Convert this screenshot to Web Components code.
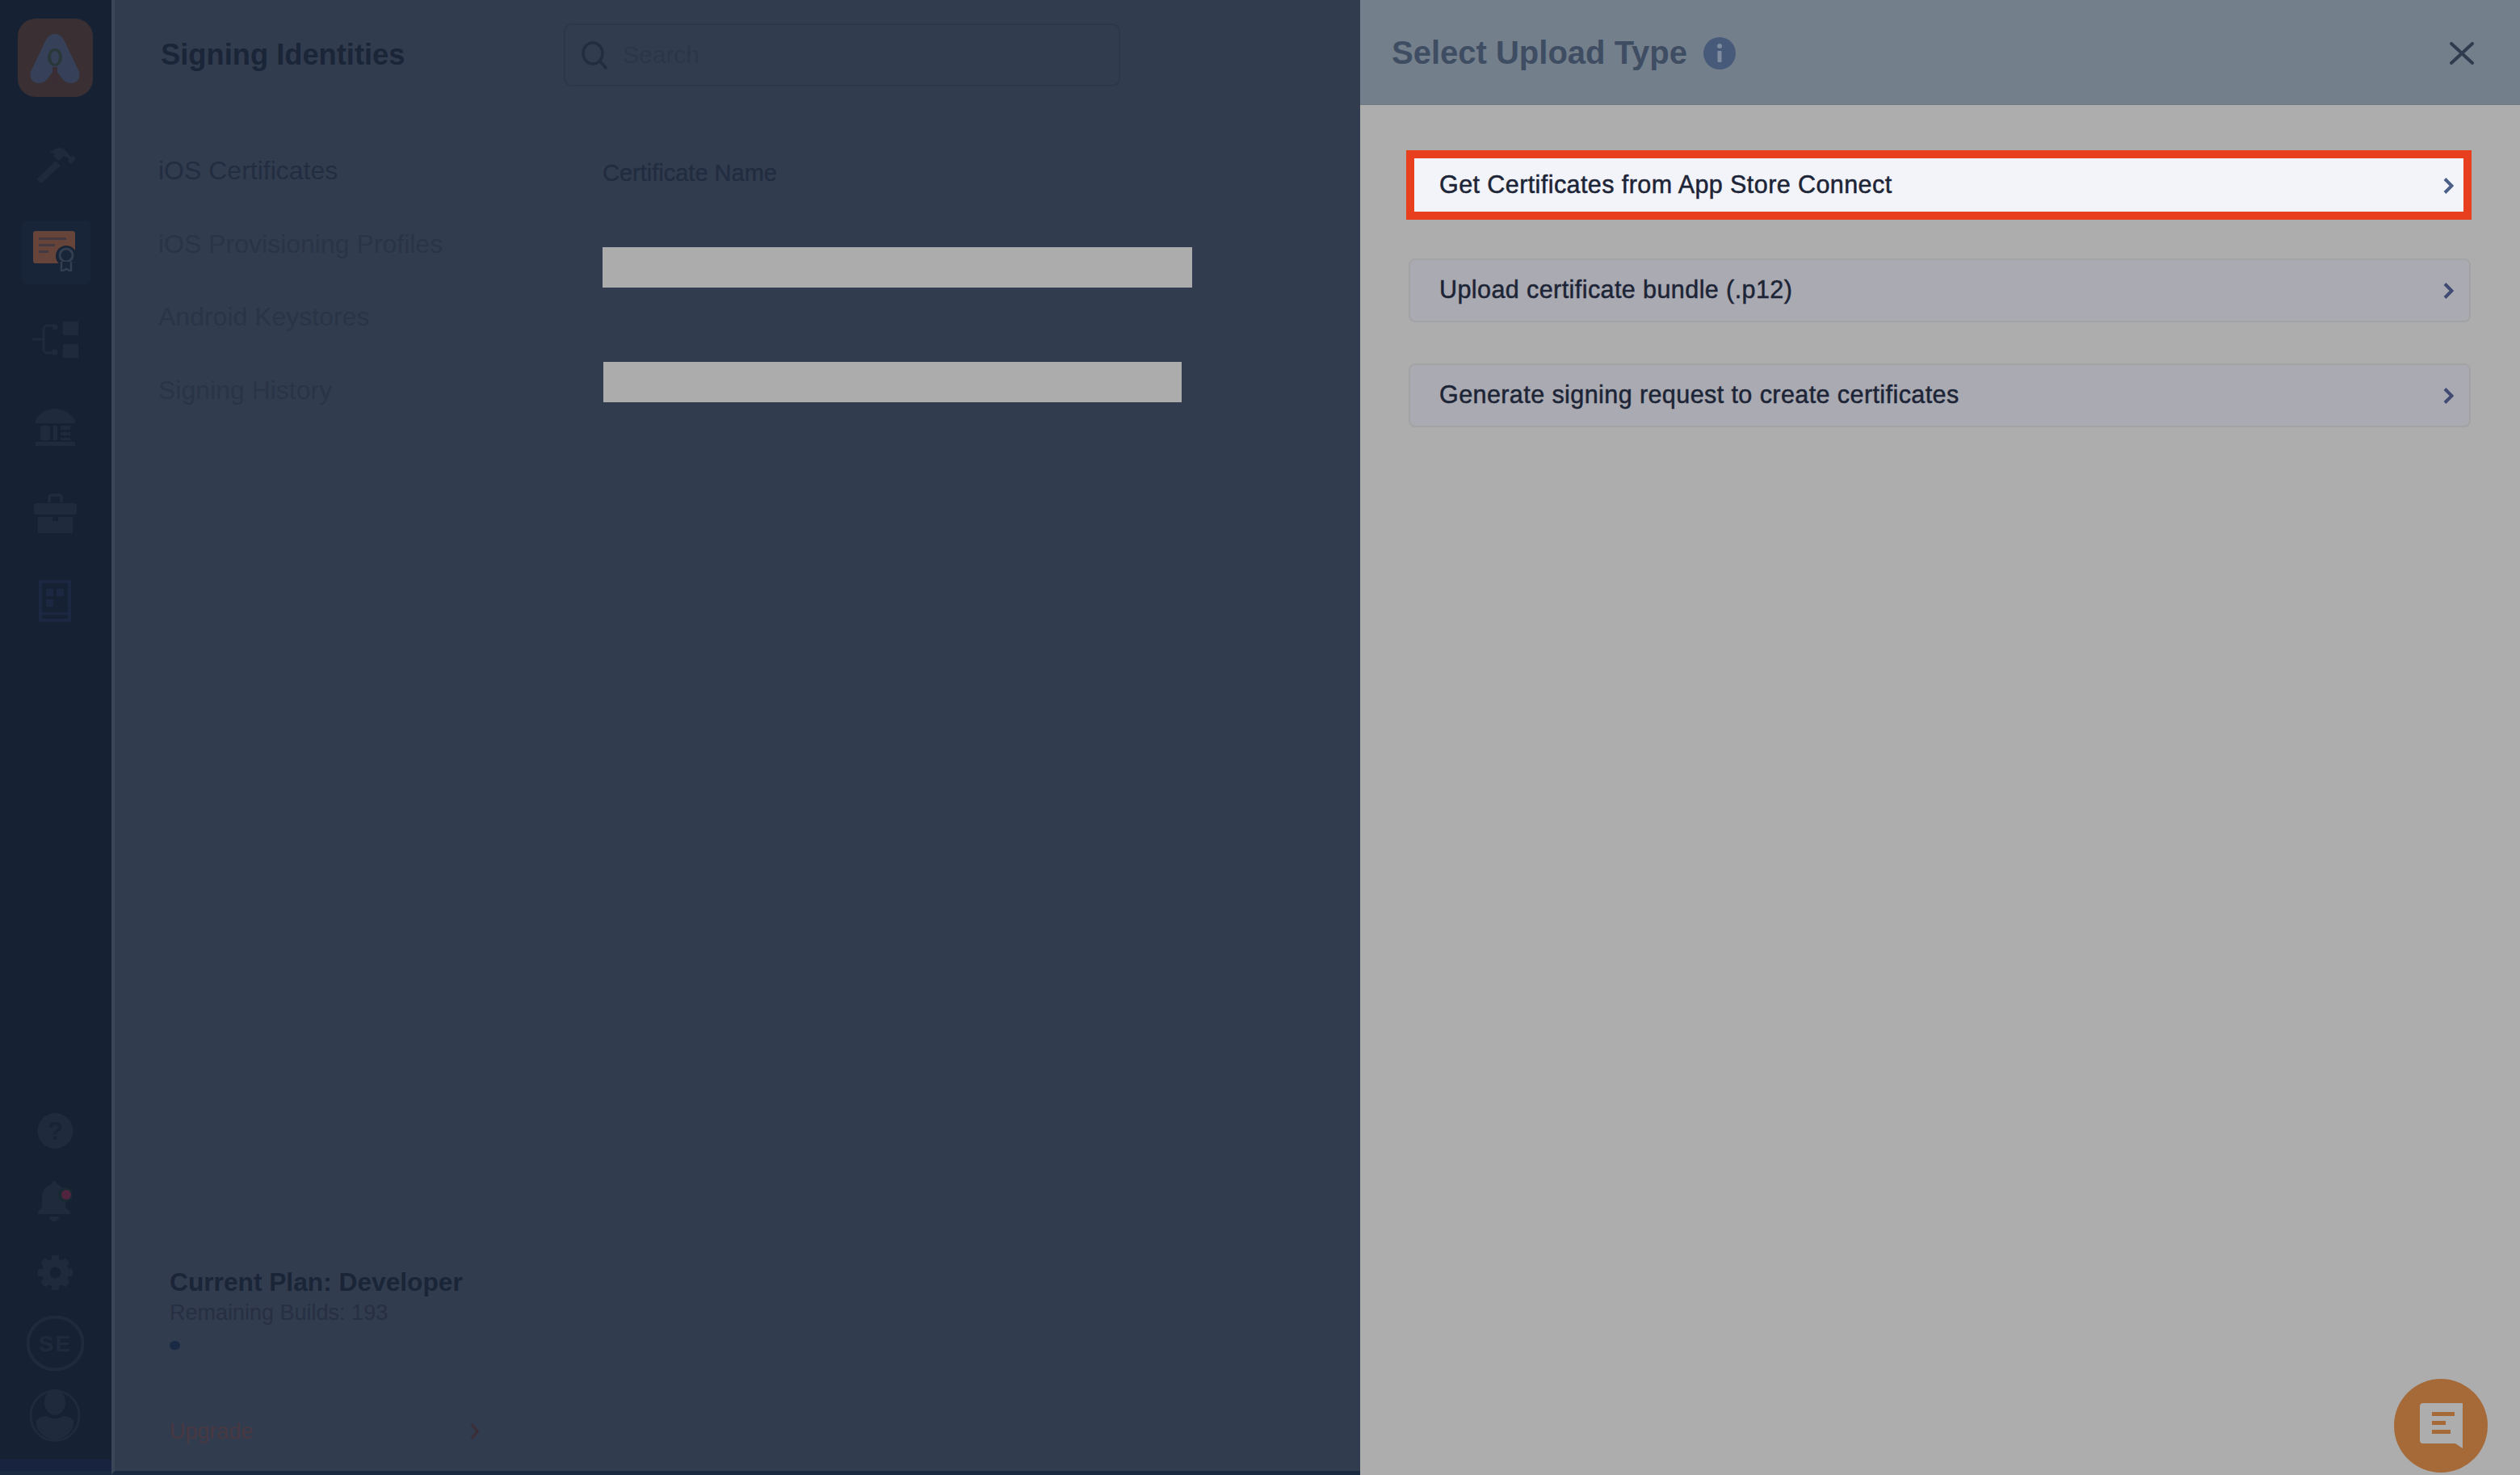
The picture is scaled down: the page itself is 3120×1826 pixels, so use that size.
<!DOCTYPE html>
<html>
<head>
<meta charset="utf-8">
<title>Signing Identities</title>
<style>
  html, body { margin: 0; padding: 0; }
  body { width: 3120px; height: 1826px; overflow: hidden; font-family: "Liberation Sans", Arial, sans-serif; }
</style>
</head>
<body>
<app-shell>
  <nav-rail>
    <rail-icon name="logo" w="93" h="97" top="23"></rail-icon>
    <rail-icon name="hammer" w="51" h="45" top="62"></rail-icon>
    <rail-icon name="cert" w="54" h="50" top="59" active></rail-icon>
    <rail-icon name="flow" w="57" h="46" top="61"></rail-icon>
    <rail-icon name="bank" w="53" h="47" top="62"></rail-icon>
    <rail-icon name="case" w="53" h="50" top="58"></rail-icon>
    <rail-icon name="doc" w="40" h="52" top="58"></rail-icon>
    <rail-icon slot="bottom" name="help" w="45" h="44"></rail-icon>
    <rail-icon slot="bottom" name="bell" w="42" h="50" top="40"></rail-icon>
    <rail-icon slot="bottom" name="gear" w="45" h="43" top="42"></rail-icon>
    <rail-icon slot="bottom" name="initials" w="71" h="68" top="32"></rail-icon>
    <rail-icon slot="bottom" name="avatar" w="62" h="65" top="23"></rail-icon>
  </nav-rail>
  <signing-pane></signing-pane>
  <upload-drawer heading="Select Upload Type">
    <upload-option highlight>Get Certificates from App Store Connect</upload-option>
    <upload-option>Upload certificate bundle (.p12)</upload-option>
    <upload-option>Generate signing request to create certificates</upload-option>
  </upload-drawer>
  <chat-fab></chat-fab>
</app-shell>

<script>
const FONT = '"Liberation Sans", Arial, sans-serif';
const INK = '#1f2a3c';

class AppShell extends HTMLElement {
  connectedCallback() {
    this.attachShadow({ mode: 'open' });
    this.shadowRoot.innerHTML = `
      <style>
        :host {
          display: flex;
          position: relative;
          width: 3120px;
          height: 1826px;
          overflow: hidden;
          font-family: ${FONT};
        }
      </style>
      <slot></slot>
    `;
  }
}

class NavRail extends HTMLElement {
  connectedCallback() {
    this.attachShadow({ mode: 'open' });
    this.shadowRoot.innerHTML = `
      <style>
        :host {
          display: flex;
          flex-direction: column;
          align-items: center;
          flex: 0 0 138px;
          height: 1826px;
          box-sizing: border-box;
          background: #162234;
          border-bottom: 5px solid #1a2a40;
        }
        .top, .bottom { display: flex; flex-direction: column; align-items: center; width: 100%; box-sizing: border-box; padding-right: 2px; }
        .bottom { margin-top: auto; padding-right: 0; }
        .band { align-self: stretch; height: 14px; margin-top: 22px; background: #17233f; }
        ::slotted(rail-icon[slot="bottom"]) { left: -1px; }
      </style>
      <div class="top"><slot></slot></div>
      <div class="bottom"><slot name="bottom"></slot><div class="band"></div></div>
    `;
  }
}

const ICONS = {
  logo: `<rect width="93" height="97" rx="22" fill="#3a3033"/>
    <path d="M46 19c7 0 10 5 13 11l16 34c4 9-1 16-9 16-6 0-9-3-13-8l-4-6V80h-6V66l-4 6c-4 5-7 8-13 8-8 0-13-7-9-16l16-34c3-6 6-11 13-11z" fill="#364058"/>
    <ellipse cx="46" cy="48" rx="9" ry="11" fill="#2b3638"/><ellipse cx="46" cy="48" rx="5" ry="8" fill="#364058"/>
    <rect x="43" y="60" width="6" height="20" fill="#3a2e34"/>`,
  hammer: `<path d="M2 40L26 17l6 6L8 45z" fill="${INK}"/>
    <path d="M17 8c7-7 15-9 21-4l6 8 4-1 3 3-6 7-4-3 1-4-6-3-6 6-7-6 2-2c-2-2-5-2-8-1z" fill="${INK}"/>`,
  cert: `<rect x="0" y="0" width="52" height="40" rx="3" fill="#66443a"/>
    <rect x="7" y="8" width="34" height="3" fill="#423a40"/><rect x="7" y="16" width="20" height="3" fill="#423a40"/><rect x="7" y="24" width="12" height="3" fill="#423a40"/>
    <circle cx="41" cy="31" r="13" fill="#182437"/><circle cx="41" cy="30" r="8" fill="#182437" stroke="#333e50" stroke-width="3"/>
    <path d="M35 38v12l6-3 6 3V38" fill="#182437" stroke="#333e50" stroke-width="2.500"/>`,
  flow: `<rect x="38" y="1" width="19" height="17" fill="${INK}"/><rect x="38" y="29" width="19" height="17" fill="${INK}"/>
    <path d="M0 23h14M14 11v24c0 3 2 5 5 5h11M14 11c0-3 2-5 5-5h11" fill="none" stroke="${INK}" stroke-width="3"/>
    <circle cx="28" cy="8" r="3.500" fill="${INK}"/><circle cx="28" cy="39" r="3.500" fill="${INK}"/>`,
  bank: `<path d="M2 16C6 7 16 1 26 1s21 6 25 15v3H2z" fill="${INK}"/>
    <rect x="8" y="22" width="12" height="18" fill="${INK}"/><rect x="24" y="22" width="5" height="18" fill="${INK}"/>
    <rect x="33" y="22" width="12" height="5" fill="${INK}"/><rect x="33" y="30" width="12" height="4" fill="${INK}"/><rect x="33" y="37" width="12" height="3" fill="${INK}"/>
    <rect x="2" y="42" width="49" height="5" fill="${INK}"/>`,
  case: `<path d="M17 12V6c0-3 2-5 5-5h9c3 0 5 2 5 5v6h-4V6c0-1 0-1-1-1h-9c-1 0-1 0-1 1v6z" fill="${INK}"/>
    <rect x="0" y="13" width="53" height="14" rx="2" fill="${INK}"/>
    <path d="M5 30h18v5h7v-5h18v20H5z" fill="${INK}"/>`,
  doc: `<rect x="2" y="2" width="36" height="48" fill="none" stroke="#1c2741" stroke-width="4"/>
    <rect x="9" y="11" width="9" height="9" fill="#1c2741"/><rect x="22" y="11" width="9" height="9" fill="#1c2741"/><rect x="9" y="24" width="9" height="9" fill="#1c2741"/>
    <rect x="2" y="40" width="36" height="3" fill="#1c2741"/>`,
  help: `<circle cx="22.500" cy="22" r="22" fill="${INK}"/>
    <text x="22.500" y="33" text-anchor="middle" font-size="32" font-weight="700" font-family="Liberation Sans" fill="#182436">?</text>`,
  bell: `<path d="M20 0c2 0 3 2 3 4 7 2 11 8 11 15v14l6 5v3H0v-3l5-5V19C5 12 10 6 17 4c0-2 1-4 3-4z" fill="${INK}"/>
    <path d="M14 44h12c0 4-3 6-6 6s-6-2-6-6z" fill="${INK}"/>
    <circle cx="34" cy="17" r="9" fill="#1a2a33"/><circle cx="35" cy="17" r="6" fill="#50243f"/>`,
  gear: `<g fill="${INK}"><circle cx="22.500" cy="21.500" r="17"/>
    <rect x="18" y="0" width="9" height="43" rx="2"/><rect x="18" y="0" width="9" height="43" rx="2" transform="rotate(45 22.500 21.500)"/>
    <rect x="18" y="0" width="9" height="43" rx="2" transform="rotate(90 22.500 21.500)"/><rect x="18" y="0" width="9" height="43" rx="2" transform="rotate(135 22.500 21.500)"/></g>
    <circle cx="22.500" cy="21.500" r="7" fill="#162234"/>`,
  initials: `<ellipse cx="35.500" cy="34" rx="34" ry="32.500" fill="none" stroke="${INK}" stroke-width="4"/>
    <text x="35.500" y="44" text-anchor="middle" font-size="28" font-weight="700" letter-spacing="2" font-family="Liberation Sans" fill="${INK}">SE</text>`,
  avatar: `<ellipse cx="31" cy="32.500" rx="30" ry="31" fill="none" stroke="${INK}" stroke-width="3"/>
    <ellipse cx="31" cy="16" rx="13" ry="16" fill="${INK}"/>
    <path d="M8 38c6-5 12-6 15-4 4 3 12 3 16 0 3-2 9-1 15 4 2 12-10 24-23 24S6 50 8 38z" fill="${INK}"/>`
};

class RailIcon extends HTMLElement {
  connectedCallback() {
    const w = this.getAttribute('w');
    const h = this.getAttribute('h');
    const active = this.hasAttribute('active');
    this.style.marginTop = (this.getAttribute('top') || 0) + 'px';
    this.attachShadow({ mode: 'open' });
    this.shadowRoot.innerHTML = `
      <style>
        :host { display: block; position: relative; width: ${w}px; height: ${h}px; }
        svg { display: block; position: relative; }
        .box { position: absolute; left: -14px; right: -17px; top: -13px; bottom: -16px; background: #182437; border-radius: 6px; }
      </style>
      ${active ? '<div class="box"></div>' : ''}
      <svg width="${w}" height="${h}" viewBox="0 0 ${w} ${h}">${ICONS[this.getAttribute('name')]}</svg>
    `;
  }
}

class SigningPane extends HTMLElement {
  connectedCallback() {
    this.attachShadow({ mode: 'open' });
    this.shadowRoot.innerHTML = `
      <style>
        :host {
          display: flex;
          flex: 0 0 1546px;
          height: 1826px;
          box-sizing: border-box;
          background: #323c4f;
          border-left: 4px solid #3a4558;
          border-bottom: 5px solid #1a2a40;
          font-family: ${FONT};
        }
        .side { display: flex; flex-direction: column; width: 556px; padding-top: 46px; box-sizing: border-box; }
        h1 { margin: 0 0 0 57px; font-size: 36.300px; line-height: 44px; font-weight: 700; color: #1a2538; }
        .menu { display: flex; flex-direction: column; margin: 76px 0 0 54px; font-size: 32px; color: #2a3447; }
        .menu div { height: 90.500px; line-height: 90px; }
        .menu div:first-child { color: #232d41; }
        .plan { margin: auto 0 34px 68px; }
        .plan b { display: block; font-size: 31.700px; line-height: 36px; color: #1a2538; }
        .plan span { display: block; margin-top: 5px; font-size: 27px; line-height: 30px; color: #272f42; }
        .meter { width: 13px; height: 11px; margin-top: 20px; border-radius: 50%; background: #1a2a44; }
        .upgrade { display: flex; justify-content: space-between; align-items: center; width: 383px; height: 30px; margin-top: 86px; font-size: 27px; color: #483841; }
        .main { display: flex; flex-direction: column; padding-top: 29px; }
        .search { display: flex; align-items: center; gap: 19px; width: 689px; height: 78px; box-sizing: border-box; padding-left: 20px; border: 2px solid #2d3749; border-radius: 10px; font-size: 30px; color: #2c3649; }
        .head { margin: 90px 0 0 48px; font-size: 29px; line-height: 34px; color: #222c40; -webkit-text-stroke: .4px #222c40; }
        .bar { height: 50px; background: #acacac; }
        .b1 { width: 730px; margin: 75px 0 0 48px; }
        .b2 { width: 716px; margin: 92px 0 0 49px; }
      </style>
      <div class="side">
        <h1>Signing Identities</h1>
        <div class="menu">
          <div>iOS Certificates</div>
          <div>iOS Provisioning Profiles</div>
          <div>Android Keystores</div>
          <div>Signing History</div>
        </div>
        <div class="plan">
          <b>Current Plan: Developer</b>
          <span>Remaining Builds: 193</span>
          <div class="meter"></div>
          <div class="upgrade">Upgrade
            <svg width="10" height="20" viewBox="0 0 10 20"><path d="M1 1l7 9-7 9" fill="none" stroke="#3a2f38" stroke-width="3.500"/></svg>
          </div>
        </div>
      </div>
      <div class="main">
        <div class="search">
          <svg width="32" height="36" viewBox="0 0 32 36"><ellipse cx="14" cy="16" rx="12" ry="13" fill="none" stroke="#222d40" stroke-width="3.500"/><path d="M23 26l7 8" stroke="#222d40" stroke-width="3.500" stroke-linecap="round"/></svg>
          Search
        </div>
        <div class="head">Certificate Name</div>
        <div class="bar b1"></div>
        <div class="bar b2"></div>
      </div>
    `;
  }
}

class UploadDrawer extends HTMLElement {
  connectedCallback() {
    this.attachShadow({ mode: 'open' });
    this.shadowRoot.innerHTML = `
      <style>
        :host {
          display: flex;
          flex-direction: column;
          flex: 1;
          height: 1826px;
          background: #adadad;
          font-family: ${FONT};
        }
        header {
          display: flex;
          align-items: center;
          height: 130px;
          box-sizing: border-box;
          padding: 2px 57px 0 39px;
          background: #747f8c;
          border-bottom: 1px solid #6f7882;
        }
        h2 { margin: 0; font-size: 40px; font-weight: 700; color: #3f4d63; }
        .info { margin-left: 20px; }
        .close { margin-left: auto; }
        .list { display: flex; flex-direction: column; gap: 51px; padding: 60px 61px 0 60px; }
      </style>
      <header>
        <h2>${this.getAttribute('heading')}</h2>
        <svg class="info" width="40" height="40" viewBox="0 0 40 40">
          <circle cx="20" cy="20" r="20" fill="#485a7a"/>
          <circle cx="20" cy="11" r="3" fill="#7f8ca0"/>
          <rect x="17.500" y="17" width="5" height="14" rx="1" fill="#7f8ca0"/>
        </svg>
        <svg class="close" width="30" height="28" viewBox="0 0 30 28"><path d="M2 2l26 24M28 2L2 26" fill="none" stroke="#303c4e" stroke-width="4" stroke-linecap="round"/></svg>
      </header>
      <div class="list"><slot></slot></div>
    `;
  }
}

class UploadOption extends HTMLElement {
  connectedCallback() {
    const on = this.hasAttribute('highlight');
    this.attachShadow({ mode: 'open' });
    this.shadowRoot.innerHTML = `
      <style>
        :host {
          display: flex;
          align-items: center;
          justify-content: space-between;
          position: relative;
          height: 79px;
          box-sizing: border-box;
          padding: 0 19px 0 36px;
          background: ${on ? '#f2f4fa' : '#aaaab2'};
          border: 2px solid ${on ? '#f2f4fa' : '#a3a3a6'};
          border-radius: 8px;
        }
        .label { padding-bottom: 3px; font-size: 30.500px; letter-spacing: .42px; color: #1c2436; -webkit-text-stroke: .5px #1c2436; }
        .mark { position: absolute; left: -5px; right: -3px; top: -6px; bottom: -5px; border: 10px solid #e8401f; }
      </style>
      <span class="label"><slot></slot></span>
      <svg width="13" height="20" viewBox="0 0 13 20"><path d="M2 1.500l8.500 8.500-8.500 8.500" fill="none" stroke="${on ? '#4b6088' : '#414a72'}" stroke-width="4"/></svg>
      ${on ? '<div class="mark"></div>' : ''}
    `;
  }
}

class ChatFab extends HTMLElement {
  connectedCallback() {
    this.attachShadow({ mode: 'open' });
    this.shadowRoot.innerHTML = `
      <style>
        :host {
          display: flex;
          align-items: center;
          justify-content: center;
          position: absolute;
          right: 40px;
          bottom: 3px;
          width: 116px;
          height: 116px;
          border-radius: 50%;
          background: #a66a38;
        }
      </style>
      <svg width="53" height="56" viewBox="0 0 53 56">
        <path d="M4 0H53V56L44 50H4a4 4 0 0 1-4-4V4a4 4 0 0 1 4-4z" fill="#adadad"/>
        <rect x="15" y="11" width="28" height="5" fill="#a66a38"/>
        <rect x="15" y="22" width="17" height="5" fill="#a66a38"/>
        <rect x="15" y="33" width="23" height="5" fill="#a66a38"/>
      </svg>
    `;
  }
}

customElements.define('app-shell', AppShell);
customElements.define('nav-rail', NavRail);
customElements.define('rail-icon', RailIcon);
customElements.define('signing-pane', SigningPane);
customElements.define('upload-drawer', UploadDrawer);
customElements.define('upload-option', UploadOption);
customElements.define('chat-fab', ChatFab);
</script>
</body>
</html>
